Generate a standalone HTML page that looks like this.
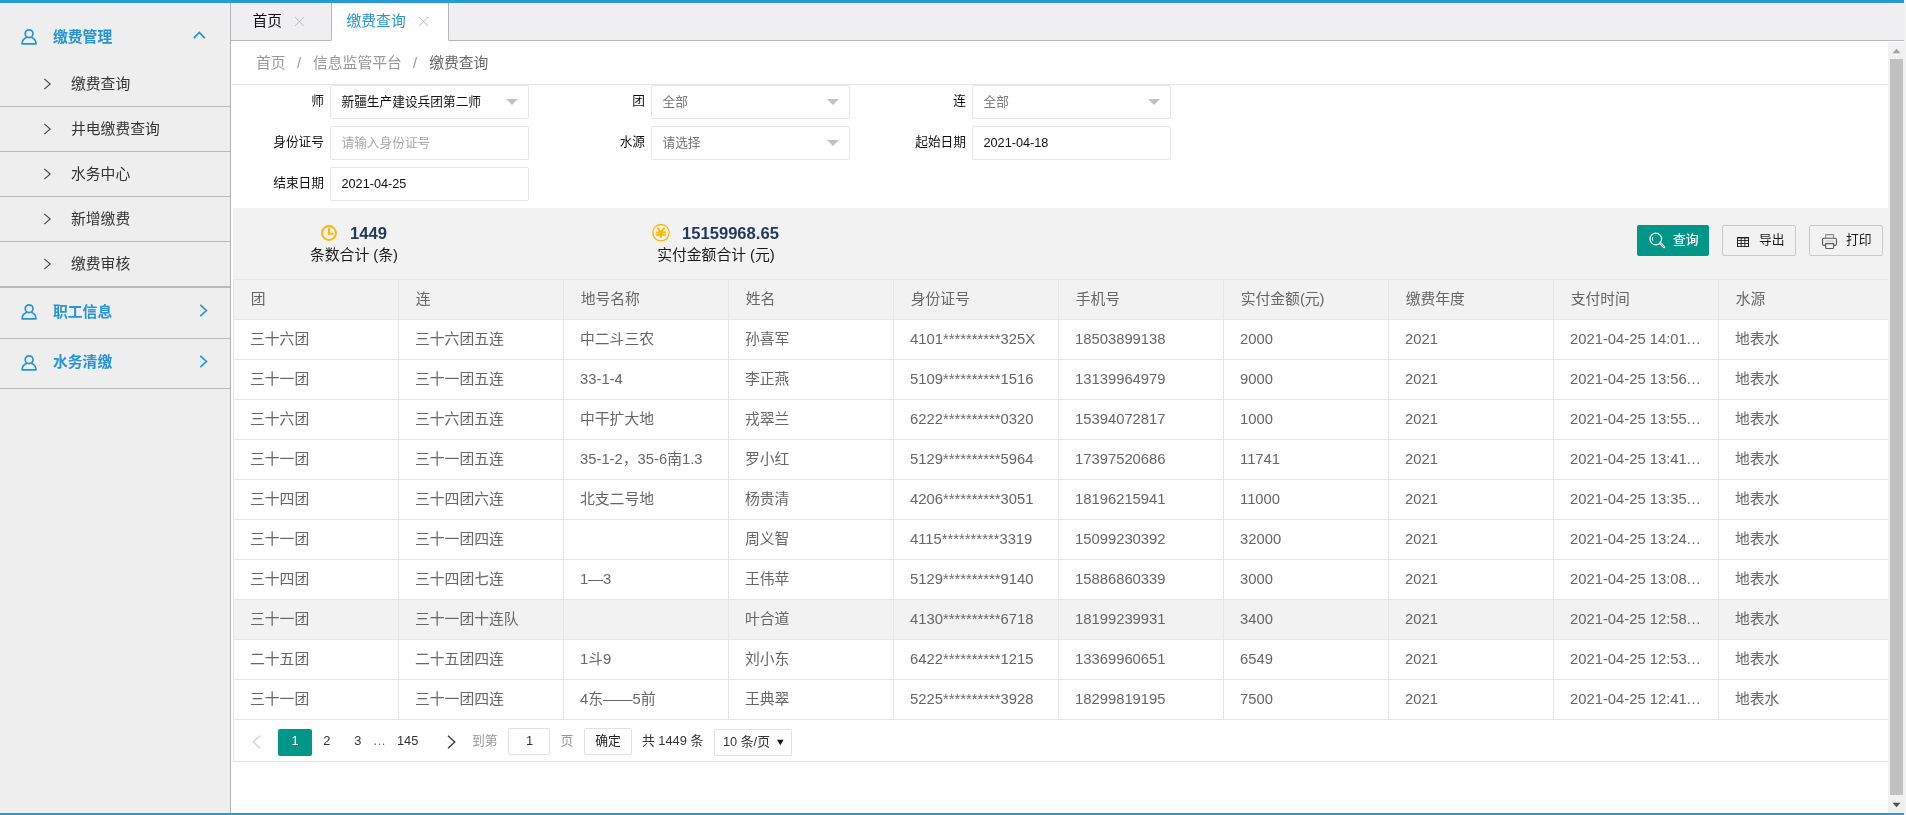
<!DOCTYPE html>
<html lang="zh-CN">
<head>
<meta charset="utf-8">
<title>缴费查询</title>
<style>
*{box-sizing:border-box;margin:0;padding:0}
html,body{width:1906px;height:815px;overflow:hidden;background:#f2f2f2}
#main{left:231px;top:41px;width:1673px;height:772px;background:#fff}
body{will-change:transform;font-family:"Liberation Sans","Noto Sans CJK SC",sans-serif;font-size:14.8px;color:#333;position:relative}
.a{position:absolute}
svg{display:block;overflow:visible}
#top{left:0;top:0;width:1904px;height:3px;background:#2898d8}
#bot{left:0;top:813px;width:1904px;height:2px;background:#2898d8}
/* sidebar */
#side{left:0;top:3px;width:231px;height:810px;background:#eeeeee;border-right:1px solid #b4b4b4}
.mh{left:0;width:230px;height:50px;line-height:52px;color:#2496d8;font-weight:bold;font-size:14.8px}
.mh .ic{left:21px;top:18px;width:16px;height:16px}
.mh .tx{left:53px;top:0;white-space:nowrap}
.mh .ar{top:0}
.ms{left:0;width:230px;height:45px;line-height:45px;border-bottom:1px solid #b9b9b9;color:#333;font-size:14.8px}
.ms .ar{left:43px;top:15.5px;width:9px;height:12px}
.ms .tx{left:71px;top:0;white-space:nowrap}
/* tabs */
#tabs{left:231px;top:3px;width:1673px;height:38px;background:#fff}
#tr{left:217px;top:0;width:1456px;height:38px;background:#efeff1;border-left:1px solid #b6b6b6;border-bottom:1px solid #b6b6b6;border-bottom-left-radius:2px}
.tab{top:0;height:38px;line-height:36px;font-size:14.8px;white-space:nowrap}
.tab .x{top:13px;width:11px;height:11px}
#t1{left:0;width:101px;color:#111;background:#efeff1;border-right:1px solid #b6b6b6;border-bottom:1px solid #b6b6b6;border-bottom-right-radius:2px}
#t2{left:101px;width:116px;background:#fff;color:#2496d8}
/* content */
#bc{left:233px;top:41px;width:1655px;height:44px;border-bottom:1px solid #e6e6e6;line-height:45px;font-size:14.8px;color:#999;white-space:nowrap}
#bc span{position:absolute;top:0}
.lb{height:34px;line-height:33px;font-size:12.7px;color:#111;text-align:right;width:90px;white-space:nowrap}
.in{height:34px;width:199px;border:1px solid #e6e6e6;border-radius:2px;background:#fff;font-size:12.7px;line-height:32px;padding-left:10.5px;color:#111;white-space:nowrap}
.in.g{color:#777}
.in.p{color:#a9a9a9}
.in .tri{right:10px;top:13px;width:0;height:0;border:6px solid transparent;border-top-color:#c2c2c2;border-bottom-width:0}
#st{left:233px;top:208px;width:1655px;height:71px;background:#f2f2f2}
.num{font-weight:bold;font-size:16.6px;color:#23395d;white-space:nowrap;line-height:20px;height:20px}
.sl{font-size:14.8px;color:#1a1a1a;white-space:nowrap;line-height:20px;height:20px;text-align:center}
.btn{top:17px;height:31px;border-radius:2px;font-size:12.8px;line-height:27px;white-space:nowrap}
.btn.pr{background:#009688;color:#fff;line-height:29px;font-weight:500}
.btn.df{border:1px solid #c9c9c9;color:#1a1a1a}
/* table */
.tb{position:absolute;left:233px;top:279px;width:1655px;border-collapse:separate;border-spacing:0;border-top:1px solid #e6e6e6;border-left:1px solid #e6e6e6;table-layout:fixed;font-size:14.8px;color:#666}
.tb th,.tb td{height:40px;border-right:1px solid #e6e6e6;border-bottom:1px solid #e6e6e6;padding:0;text-align:left;font-weight:normal;width:165px}
.tb th:last-child,.tb td:last-child{width:auto;border-right:0}
.tb th{background:#f2f2f2}
.tb th .c{padding-left:16.7px}
.tb tr.hv td{background:#f2f2f2}
.tb .c{padding:0 0 0 16px;height:39px;line-height:38px;white-space:nowrap;overflow:hidden}
.el{letter-spacing:0.6px}
/* page */
#pg{left:233px;top:720px;width:1656px;height:42px;font-size:12.8px;color:#333}
#pgb{left:233px;top:720px;width:1655px;height:42px;border-left:1px solid #e6e6e6;border-bottom:1px solid #e6e6e6}
#pg .a{white-space:nowrap;line-height:23px;height:27px;top:9px}
/* scrollbar */
#sb{left:1888px;top:42px;width:16px;height:771px;background:#f1f1f1}
#sb .th{left:2px;top:17px;width:13px;height:736px;background:#c1c1c1}

</style>
</head>
<body>
<div id="top" class="a"></div>
<div id="side" class="a">
  <div class="mh a" style="top:8px">
    <svg class="ic a" viewBox="0 0 16 16"><g fill="none" stroke="#2496d8" stroke-width="1.7"><circle cx="8.1" cy="4.7" r="3.9"/><path d="M5.9 8.2C3.2 9.2 1.1 11.4 1.1 14.8H15C15 11.4 12.9 9.2 10.3 8.2" stroke-linejoin="round"/></g></svg>
    <span class="tx a">缴费管理</span>
    <svg class="ar a" style="left:193px;top:19.5px;width:13px;height:8px" viewBox="0 0 13 8"><path d="M0.8 7.2L6.3 1.4L11.8 7.2" fill="none" stroke="#2496d8" stroke-width="1.7"/></svg>
  </div>
  <div class="ms a" style="top:59px"><svg class="ar a" viewBox="0 0 9 12"><path d="M1.3 0.9L7.2 6L1.3 11.1" fill="none" stroke="#444" stroke-width="1.1"/></svg><span class="tx a">缴费查询</span></div>
  <div class="ms a" style="top:104px"><svg class="ar a" viewBox="0 0 9 12"><path d="M1.3 0.9L7.2 6L1.3 11.1" fill="none" stroke="#444" stroke-width="1.1"/></svg><span class="tx a">井电缴费查询</span></div>
  <div class="ms a" style="top:149px"><svg class="ar a" viewBox="0 0 9 12"><path d="M1.3 0.9L7.2 6L1.3 11.1" fill="none" stroke="#444" stroke-width="1.1"/></svg><span class="tx a">水务中心</span></div>
  <div class="ms a" style="top:194px"><svg class="ar a" viewBox="0 0 9 12"><path d="M1.3 0.9L7.2 6L1.3 11.1" fill="none" stroke="#444" stroke-width="1.1"/></svg><span class="tx a">新增缴费</span></div>
  <div class="ms a" style="top:239px"><svg class="ar a" viewBox="0 0 9 12"><path d="M1.3 0.9L7.2 6L1.3 11.1" fill="none" stroke="#444" stroke-width="1.1"/></svg><span class="tx a">缴费审核</span></div>
  <div class="mh a" style="top:284px;height:52px;border-top:1px solid #b9b9b9;border-bottom:1px solid #b9b9b9;line-height:48px">
    <svg class="ic a" style="top:16px" viewBox="0 0 16 16"><g fill="none" stroke="#2496d8" stroke-width="1.7"><circle cx="8.1" cy="4.7" r="3.9"/><path d="M5.9 8.2C3.2 9.2 1.1 11.4 1.1 14.8H15C15 11.4 12.9 9.2 10.3 8.2" stroke-linejoin="round"/></g></svg>
    <span class="tx a">职工信息</span>
    <svg class="ar a" style="left:199px;top:15.7px;width:9px;height:13px" viewBox="0 0 9 13"><path d="M1.3 0.8L7.4 6.5L1.3 12.2" fill="none" stroke="#2496d8" stroke-width="1.7"/></svg>
  </div>
  <div class="mh a" style="top:336px;height:50px;border-bottom:1px solid #b9b9b9;line-height:47px">
    <svg class="ic a" style="top:15.6px" viewBox="0 0 16 16"><g fill="none" stroke="#2496d8" stroke-width="1.7"><circle cx="8.1" cy="4.7" r="3.9"/><path d="M5.9 8.2C3.2 9.2 1.1 11.4 1.1 14.8H15C15 11.4 12.9 9.2 10.3 8.2" stroke-linejoin="round"/></g></svg>
    <span class="tx a">水务清缴</span>
    <svg class="ar a" style="left:199px;top:15.6px;width:9px;height:13px" viewBox="0 0 9 13"><path d="M1.3 0.8L7.4 6.5L1.3 12.2" fill="none" stroke="#2496d8" stroke-width="1.7"/></svg>
  </div>
</div>
<div id="main" class="a"></div>
<div id="tabs" class="a">
  <div id="t1" class="tab a"><span class="a" style="left:21.5px">首页</span><svg class="x a" style="left:63px" viewBox="0 0 11 11"><path d="M1 1L10 10M10 1L1 10" stroke="#c2c2c2" stroke-width="1.05" fill="none"/></svg></div>
  <div id="tr" class="a"></div>
  <div id="t2" class="tab a"><span class="a" style="left:14.5px">缴费查询</span><svg class="x a" style="left:86px" viewBox="0 0 11 11"><path d="M1 1L10 10M10 1L1 10" stroke="#c2c2c2" stroke-width="1.05" fill="none"/></svg></div>
</div>
<div id="bc" class="a"><span style="left:23px">首页</span><span style="left:64px">/</span><span style="left:80px">信息监管平台</span><span style="left:180px">/</span><span style="left:196.2px;color:#666">缴费查询</span></div>

<div class="lb a" style="left:234px;top:85px">师</div>
<div class="in a" style="left:330px;top:85px">新疆生产建设兵团第二师<i class="tri a"></i></div>
<div class="lb a" style="left:555px;top:85px">团</div>
<div class="in g a" style="left:651px;top:85px">全部<i class="tri a"></i></div>
<div class="lb a" style="left:876px;top:85px">连</div>
<div class="in g a" style="left:972px;top:85px">全部<i class="tri a"></i></div>
<div class="lb a" style="left:234px;top:126px">身份证号</div>
<div class="in p a" style="left:330px;top:126px">请输入身份证号</div>
<div class="lb a" style="left:555px;top:126px">水源</div>
<div class="in g a" style="left:651px;top:126px">请选择<i class="tri a"></i></div>
<div class="lb a" style="left:876px;top:126px">起始日期</div>
<div class="in a" style="left:972px;top:126px">2021-04-18</div>
<div class="lb a" style="left:234px;top:167px">结束日期</div>
<div class="in a" style="left:330px;top:167px">2021-04-25</div>

<div id="st" class="a">
  <svg class="a" style="left:88px;top:17px;width:16px;height:16px" viewBox="0 0 16 16"><circle cx="8" cy="8" r="7" fill="none" stroke="#ffb800" stroke-width="1.9"/><path d="M8 3V8.7H12.6" fill="none" stroke="#ffb800" stroke-width="2.1"/></svg>
  <div class="num a" style="left:117px;top:16px">1449</div>
  <div class="sl a" style="left:1px;top:37px;width:240px">条数合计 (条)</div>
  <svg class="a" style="left:419px;top:16px;width:18px;height:18px" viewBox="0 0 18 18"><circle cx="9" cy="8.7" r="8.2" fill="none" stroke="#ffb800" stroke-width="1.3"/><path d="M5.5 3.6L9 8.4L12.5 3.6M4.1 8.5H13.9M4.1 10.9H13.9M9 8.3V14.1" fill="none" stroke="#ffb800" stroke-width="1.8"/></svg>
  <div class="num a" style="left:449px;top:16px">15159968.65</div>
  <div class="sl a" style="left:363px;top:37px;width:240px">实付金额合计 (元)</div>
  <div class="btn pr a" style="left:1404px;width:72px">
    <svg class="a" style="left:12px;top:7px;width:17px;height:17px" viewBox="0 0 17 17"><circle cx="6.8" cy="7" r="5.8" fill="none" stroke="#fff" stroke-width="1.3"/><path d="M3.8 5.2C3.3 6.3 3.3 7.6 3.8 8.7" fill="none" stroke="#fff" stroke-width="1"/><path d="M11.4 11.4L15.2 15.2" stroke="#fff" stroke-width="2.2" stroke-linecap="round"/><path d="M11.8 11.8L14.9 14.9" stroke="#009688" stroke-width="0.7" stroke-linecap="round"/></svg>
    <span class="a" style="left:36px;top:0">查询</span>
  </div>
  <div class="btn df a" style="left:1489px;width:74px">
    <svg class="a" style="left:14px;top:11px;width:12px;height:10px" viewBox="0 0 12 10"><g fill="#1e1e1e"><rect x="0" y="0" width="12" height="1.4"/><rect x="0" y="3.1" width="12" height="0.9"/><rect x="0" y="6.1" width="12" height="0.9"/><rect x="0" y="9.1" width="12" height="0.9"/><rect x="0" y="0" width="1" height="10"/><rect x="3.7" y="0" width="0.9" height="10"/><rect x="7.4" y="0" width="0.9" height="10"/><rect x="11" y="0" width="1" height="10"/></g></svg>
    <span class="a" style="left:36px;top:0">导出</span>
  </div>
  <div class="btn df a" style="left:1576px;width:74px">
    <svg class="a" style="left:12px;top:8px;width:15px;height:15px" viewBox="0 0 15 15"><g fill="none" stroke="#5a5a5a" stroke-width="1.1"><path d="M3.65 4.3V1.4Q3.65 0.65 4.4 0.65H10.85Q11.6 0.65 11.6 1.4V4.3" stroke="#8a8a8a"/><path d="M3.65 11.35H2Q0.55 11.35 0.55 9.9V5.8Q0.55 4.3 2 4.3H13Q14.45 4.3 14.45 5.8V9.9Q14.45 11.35 13 11.35H11.6"/><path d="M3.65 9.65H11.6V13.5Q11.6 14.5 10.6 14.5H4.65Q3.65 14.5 3.65 13.5Z"/></g><path d="M3.6 7.1H11.7" stroke="#b0b0b0" stroke-width="0.8"/></svg>
    <span class="a" style="left:36px;top:0">打印</span>
  </div>
</div>
<table class="tb"><thead><tr><th><div class="c">团</div></th><th><div class="c">连</div></th><th><div class="c">地号名称</div></th><th><div class="c">姓名</div></th><th><div class="c">身份证号</div></th><th><div class="c">手机号</div></th><th><div class="c">实付金额(元)</div></th><th><div class="c">缴费年度</div></th><th><div class="c">支付时间</div></th><th><div class="c">水源</div></th></tr>
</thead><tbody><tr><td><div class="c">三十六团</div></td><td><div class="c">三十六团五连</div></td><td><div class="c">中二斗三农</div></td><td><div class="c">孙喜军</div></td><td><div class="c">4101**********325X</div></td><td><div class="c">18503899138</div></td><td><div class="c">2000</div></td><td><div class="c">2021</div></td><td><div class="c">2021-04-25 14:01<span class="el">...</span></div></td><td><div class="c">地表水</div></td></tr>
<tr><td><div class="c">三十一团</div></td><td><div class="c">三十一团五连</div></td><td><div class="c">33-1-4</div></td><td><div class="c">李正燕</div></td><td><div class="c">5109**********1516</div></td><td><div class="c">13139964979</div></td><td><div class="c">9000</div></td><td><div class="c">2021</div></td><td><div class="c">2021-04-25 13:56<span class="el">...</span></div></td><td><div class="c">地表水</div></td></tr>
<tr><td><div class="c">三十六团</div></td><td><div class="c">三十六团五连</div></td><td><div class="c">中干扩大地</div></td><td><div class="c">戎翠兰</div></td><td><div class="c">6222**********0320</div></td><td><div class="c">15394072817</div></td><td><div class="c">1000</div></td><td><div class="c">2021</div></td><td><div class="c">2021-04-25 13:55<span class="el">...</span></div></td><td><div class="c">地表水</div></td></tr>
<tr><td><div class="c">三十一团</div></td><td><div class="c">三十一团五连</div></td><td><div class="c">35-1-2，35-6南1.3</div></td><td><div class="c">罗小红</div></td><td><div class="c">5129**********5964</div></td><td><div class="c">17397520686</div></td><td><div class="c">11741</div></td><td><div class="c">2021</div></td><td><div class="c">2021-04-25 13:41<span class="el">...</span></div></td><td><div class="c">地表水</div></td></tr>
<tr><td><div class="c">三十四团</div></td><td><div class="c">三十四团六连</div></td><td><div class="c">北支二号地</div></td><td><div class="c">杨贵清</div></td><td><div class="c">4206**********3051</div></td><td><div class="c">18196215941</div></td><td><div class="c">11000</div></td><td><div class="c">2021</div></td><td><div class="c">2021-04-25 13:35<span class="el">...</span></div></td><td><div class="c">地表水</div></td></tr>
<tr><td><div class="c">三十一团</div></td><td><div class="c">三十一团四连</div></td><td><div class="c"></div></td><td><div class="c">周义智</div></td><td><div class="c">4115**********3319</div></td><td><div class="c">15099230392</div></td><td><div class="c">32000</div></td><td><div class="c">2021</div></td><td><div class="c">2021-04-25 13:24<span class="el">...</span></div></td><td><div class="c">地表水</div></td></tr>
<tr><td><div class="c">三十四团</div></td><td><div class="c">三十四团七连</div></td><td><div class="c">1—3</div></td><td><div class="c">王伟苹</div></td><td><div class="c">5129**********9140</div></td><td><div class="c">15886860339</div></td><td><div class="c">3000</div></td><td><div class="c">2021</div></td><td><div class="c">2021-04-25 13:08<span class="el">...</span></div></td><td><div class="c">地表水</div></td></tr>
<tr class="hv"><td><div class="c">三十一团</div></td><td><div class="c">三十一团十连队</div></td><td><div class="c"></div></td><td><div class="c">叶合道</div></td><td><div class="c">4130**********6718</div></td><td><div class="c">18199239931</div></td><td><div class="c">3400</div></td><td><div class="c">2021</div></td><td><div class="c">2021-04-25 12:58<span class="el">...</span></div></td><td><div class="c">地表水</div></td></tr>
<tr><td><div class="c">二十五团</div></td><td><div class="c">二十五团四连</div></td><td><div class="c">1斗9</div></td><td><div class="c">刘小东</div></td><td><div class="c">6422**********1215</div></td><td><div class="c">13369960651</div></td><td><div class="c">6549</div></td><td><div class="c">2021</div></td><td><div class="c">2021-04-25 12:53<span class="el">...</span></div></td><td><div class="c">地表水</div></td></tr>
<tr><td><div class="c">三十一团</div></td><td><div class="c">三十一团四连</div></td><td><div class="c">4东——5前</div></td><td><div class="c">王典翠</div></td><td><div class="c">5225**********3928</div></td><td><div class="c">18299819195</div></td><td><div class="c">7500</div></td><td><div class="c">2021</div></td><td><div class="c">2021-04-25 12:41<span class="el">...</span></div></td><td><div class="c">地表水</div></td></tr>
</tbody></table>
<div id="pgb" class="a"></div>
<div id="pg" class="a">
  <svg class="a" style="left:18.6px;top:14.7px;width:9px;height:14px" viewBox="0 0 9 14"><path d="M8 0.8L1.2 7L8 13.2" fill="none" stroke="#d2d2d2" stroke-width="1.3"/></svg>
  <div class="a" style="left:45px;top:9px;width:34px;background:#009688;border-radius:2px;color:#fff;text-align:center">1</div>
  <div class="a" style="left:90.2px">2</div>
  <div class="a" style="left:121.2px">3</div>
  <div class="a" style="left:140.5px;color:#666;letter-spacing:0.6px">...</div>
  <div class="a" style="left:164px">145</div>
  <svg class="a" style="left:214px;top:14.7px;width:9px;height:14px" viewBox="0 0 9 14"><path d="M1 0.8L7.8 7L1 13.2" fill="none" stroke="#333" stroke-width="1.3"/></svg>
  <div class="a" style="left:239px;color:#999">到第</div>
  <div class="a" style="left:275px;top:8px;width:42px;height:27px;border:1px solid #e2e2e2;border-radius:2px;text-align:center;line-height:23px;padding-left:1px">1</div>
  <div class="a" style="left:327.5px;color:#999">页</div>
  <div class="a" style="left:351px;top:8px;width:48px;height:27px;border:1px solid #e2e2e2;border-radius:2px;text-align:center;line-height:23px;color:#222">确定</div>
  <div class="a" style="left:409px">共 1449 条</div>
  <div class="a" style="left:481px;top:9px;width:78px;height:27px;border:1px solid #e2e2e2;border-radius:2px;line-height:23px;padding-left:8px">10 条/页<svg class="a" style="left:62.2px;top:8.6px;width:6.6px;height:7px" viewBox="0 0 7 7"><path d="M0 0.5H7L3.5 6.5Z" fill="#111"/></svg></div>
</div>
<div id="sb" class="a">
  <svg class="a" style="left:4px;top:6px;width:9px;height:6px" viewBox="0 0 9 6"><path d="M0.5 5.2L4.5 0.8L8.5 5.2Z" fill="#a3a3a3"/></svg>
  <div class="th a"></div>
  <svg class="a" style="left:4px;top:760px;width:9px;height:6px" viewBox="0 0 9 6"><path d="M0.5 0.8L4.5 5.2L8.5 0.8Z" fill="#505050"/></svg>
</div>
<div id="bot" class="a"></div>

</body>
</html>
